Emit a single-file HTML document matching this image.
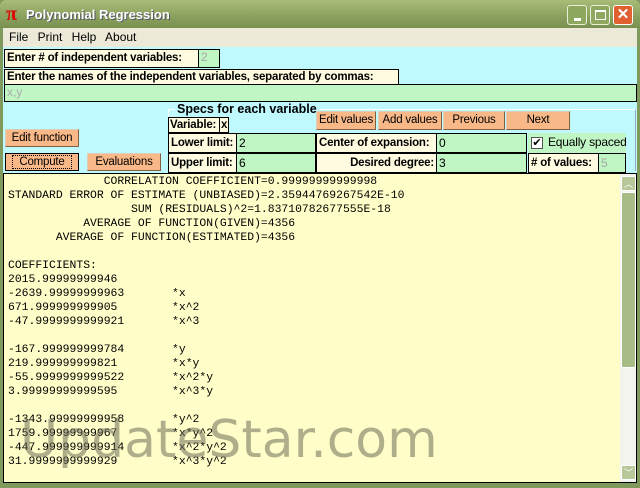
<!DOCTYPE html><html><head><style>
body{margin:0;width:640px;height:488px;overflow:hidden;background:#7f9a5c;font-family:"Liberation Sans",sans-serif;}
.a{position:absolute;box-sizing:border-box;white-space:nowrap;overflow:hidden}
.lb{background:#fffbe0;border:1px solid #000;font-weight:bold;font-size:11.5px;letter-spacing:-0.2px;line-height:15px;padding-left:2px}
.in{background:#c0f5c4;border:1px solid #000;font-size:12px;line-height:15px;padding-left:2px;color:#000}
.bt{background:#f8b888;border:1px solid #d8d0b8;border-right-color:#806040;border-bottom-color:#806040;font-size:11.5px;letter-spacing:-0.2px;text-align:center;line-height:17px}
pre{margin:0;font-family:"Liberation Mono",monospace;font-size:11.4px;line-height:14px;color:#000}
</style></head><body>
<div class="a" style="left:0;top:0;width:640px;height:28px;background:linear-gradient(#a8bc78,#8aa05e 60%,#7a9050);border-radius:6px 6px 0 0"></div>
<div class="a" style="left:6px;top:3px;color:#e00000;font:bold 20px 'Liberation Serif',serif">π</div>
<div class="a" style="left:26px;top:7px;color:#fff;font-weight:bold;font-size:13px;text-shadow:1px 1px #556">Polynomial Regression</div>
<div class="a" style="left:567px;top:5px;width:20px;height:20px;background:#8fa860;border:1px solid #e8f0d8;border-radius:3px"><div class="a" style="left:6px;top:12px;width:7px;height:3px;background:#fff"></div></div>
<div class="a" style="left:590px;top:5px;width:20px;height:20px;background:#8fa860;border:1px solid #e8f0d8;border-radius:3px"><div class="a" style="left:4px;top:4px;width:11px;height:10px;border:1px solid #fff;border-top-width:2px"></div></div>
<div class="a" style="left:613px;top:5px;width:20px;height:20px;background:#e06030;border:1px solid #fff;border-radius:3px;color:#fff;font-weight:bold;font-size:15px;text-align:center;line-height:18px">✕</div>
<div class="a" style="left:3px;top:28px;width:634px;height:19px;background:#ece9d8;font-size:12px;line-height:19px;padding-left:6px;word-spacing:6px">File Print Help About</div>
<div class="a" style="left:3px;top:47px;width:634px;height:126px;background:#bff8fd"></div>
<div class="a lb" style="left:4px;top:49px;width:195px;height:19px;line-height:17px">Enter # of independent variables:</div>
<div class="a in" style="left:198px;top:49px;width:22px;height:19px;color:#aaa">2</div>
<div class="a lb" style="left:4px;top:69px;width:395px;height:16px;line-height:14px">Enter the names of the independent variables, separated by commas:</div>
<div class="a in" style="left:4px;top:84px;width:633px;height:18px;color:#aaa">x,y</div>
<div class="a" style="left:168px;top:109px;width:468px;height:62px;border:1px solid #fff;border-right-color:#9ab;border-bottom:none"></div>
<div class="a" style="left:175px;top:102px;background:#bff8fd;font-weight:bold;font-size:12.5px;padding:0 2px">Specs for each variable</div>
<div class="a lb" style="left:168px;top:117px;width:52px;height:16px;line-height:14px;padding-left:1px">Variable:</div>
<div class="a lb" style="left:219px;top:117px;width:10px;height:16px;line-height:14px;padding-left:1px">x</div>
<div class="a bt" style="left:316px;top:111px;width:60px;height:19px">Edit values</div>
<div class="a bt" style="left:378px;top:111px;width:64px;height:19px">Add values</div>
<div class="a bt" style="left:443px;top:111px;width:62px;height:19px">Previous</div>
<div class="a bt" style="left:506px;top:111px;width:64px;height:19px">Next</div>
<div class="a lb" style="left:168px;top:133px;width:69px;height:20px;line-height:18px">Lower limit:</div>
<div class="a in" style="left:236px;top:133px;width:80px;height:20px;line-height:18px">2</div>
<div class="a lb" style="left:316px;top:133px;width:121px;height:20px;line-height:18px">Center of expansion:</div>
<div class="a in" style="left:436px;top:133px;width:91px;height:20px;line-height:18px">0</div>
<div class="a" style="left:528px;top:133px;width:98px;height:20px;background:#c0f5c4"></div>
<div class="a" style="left:531px;top:137px;width:12px;height:12px;background:#fff;border:1px solid #555;font-size:11px;line-height:10px;text-align:center">✔</div>
<div class="a" style="left:548px;top:135px;font-size:12px;letter-spacing:-0.2px">Equally spaced</div>
<div class="a lb" style="left:168px;top:153px;width:69px;height:20px;line-height:18px">Upper limit:</div>
<div class="a in" style="left:236px;top:153px;width:80px;height:20px;line-height:18px">6</div>
<div class="a lb" style="left:316px;top:153px;width:121px;height:20px;line-height:18px;text-align:right;padding-right:2px">Desired degree:</div>
<div class="a in" style="left:436px;top:153px;width:91px;height:20px;line-height:18px">3</div>
<div class="a lb" style="left:528px;top:153px;width:71px;height:20px;line-height:18px">#&nbsp;of values:</div>
<div class="a in" style="left:598px;top:153px;width:28px;height:20px;line-height:18px;color:#aaa">5</div>
<div class="a bt" style="left:5px;top:129px;width:74px;height:18px">Edit function</div>
<div class="a bt" style="left:5px;top:153px;width:74px;height:18px;border:1px solid #000"><span style="outline:1px dotted #000;padding:0 6px">Compute</span></div>
<div class="a bt" style="left:87px;top:153px;width:74px;height:18px">Evaluations</div>
<div class="a" style="left:3px;top:173px;width:634px;height:310px;background:#fffdc8;border:1px solid #000;overflow:hidden">
<pre style="position:absolute;left:4px;top:1px">              CORRELATION COEFFICIENT=0.99999999999998
STANDARD ERROR OF ESTIMATE (UNBIASED)=2.35944769267542E-10
                  SUM (RESIDUALS)^2=1.83710782677555E-18
           AVERAGE OF FUNCTION(GIVEN)=4356
       AVERAGE OF FUNCTION(ESTIMATED)=4356

COEFFICIENTS:
2015.99999999946
-2639.99999999963       *x
671.999999999905        *x^2
-47.9999999999921       *x^3

-167.999999999784       *y
219.999999999821        *x*y
-55.9999999999522       *x^2*y
3.99999999999595        *x^3*y

-1343.99999999958       *y^2
1759.99999999967        *x*y^2
-447.999999999914       *x^2*y^2
31.9999999999929        *x^3*y^2</pre>
<div class="a" style="left:616px;top:0;width:17px;height:308px;background:#f4f4ee"></div>
<div class="a" style="left:617px;top:2px;width:15px;height:15px;background:#b8c898;border:1px solid #fff;border-radius:2px;color:#fff;font-size:9px;text-align:center;line-height:14px">︿</div>
<div class="a" style="left:617px;top:18px;width:15px;height:176px;background:#a8bc88;border:1px solid #fff;border-radius:2px"></div>
<div class="a" style="left:617px;top:291px;width:15px;height:15px;background:#b8c898;border:1px solid #fff;border-radius:2px;color:#fff;font-size:9px;text-align:center;line-height:14px">﹀</div>
<div class="a" style="left:16px;top:236px;font-size:52px;color:rgba(110,110,90,.55);font-family:'DejaVu Sans',sans-serif;overflow:visible">UpdateStar.com</div>
</div>
</body></html>
